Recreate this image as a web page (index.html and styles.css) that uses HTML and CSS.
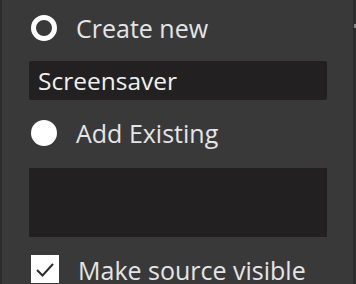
FILE: index.html
```html
<!DOCTYPE html>
<html>
<head>
<meta charset="utf-8">
<link rel="stylesheet" href="styles.css">
</head>
<body>
<div class="panel">
  <label class="row r1">
    <span class="radio radio-off"></span>
    <span class="label">Create new</span>
  </label>
  <div class="field">Screensaver</div>
  <label class="row r2">
    <span class="radio radio-on"></span>
    <span class="label">Add Existing</span>
  </label>
  <div class="listbox"></div>
  <label class="row r3">
    <span class="check">
      <svg width="28" height="28" viewBox="0 0 28 28"><path d="M6 15 L11.5 20.5 L22 9" fill="none" stroke="#2b2b2b" stroke-width="2"/></svg>
    </span>
    <span class="label">Make source visible</span>
  </label>
</div>
<div class="scrollmark"></div>
</body>
</html>
```
FILE: styles.css
```css
html, body {
  margin: 0;
  padding: 0;
  width: 356px;
  height: 284px;
  overflow: hidden;
  background: #3a3939;
}
body {
  position: relative;
  font-family: "Open Sans", "Noto Sans", sans-serif;
  color: #e3e5e8;
}
.panel {
  height: 284px;
  box-sizing: border-box;
  border-left: 2px solid #2c2b2b;
  border-right: 3px solid #2c2b2b;
  padding: 14px 26px 0 27px;
  display: flex;
  flex-direction: column;
}
.row {
  display: flex;
  align-items: center;
  gap: 19px;
  padding-left: 2px;
}
.label {
  font-size: 25px;
  line-height: 28px;
}
.radio {
  width: 26px;
  height: 26px;
  border-radius: 50%;
  box-sizing: border-box;
  flex: none;
}
.radio-off {
  border: 5px solid #ffffff;
  background: #3a3939;
}
.radio-on {
  background: #ffffff;
}
.field {
  margin-top: 19px;
  height: 39px;
  background: #222020;
  border-radius: 2px;
  font-size: 24.5px;
  line-height: 39px;
  padding-left: 9px;
  color: #f0f0f0;
}
.r2 { margin-top: 19px; }
.listbox {
  margin-top: 21px;
  height: 70px;
  background: #222020;
}
.r3 {
  margin-top: 18px;
  align-items: flex-start;
}
.check {
  width: 28px;
  height: 28px;
  background: #ffffff;
  flex: none;
  display: block;
}
.check svg { display: block; }
.r3 .label { margin-top: 1px; }
.scrollmark {
  position: absolute;
  right: 0;
  top: 24px;
  width: 2px;
  height: 4px;
  background: #8a8a8a;
}
```
